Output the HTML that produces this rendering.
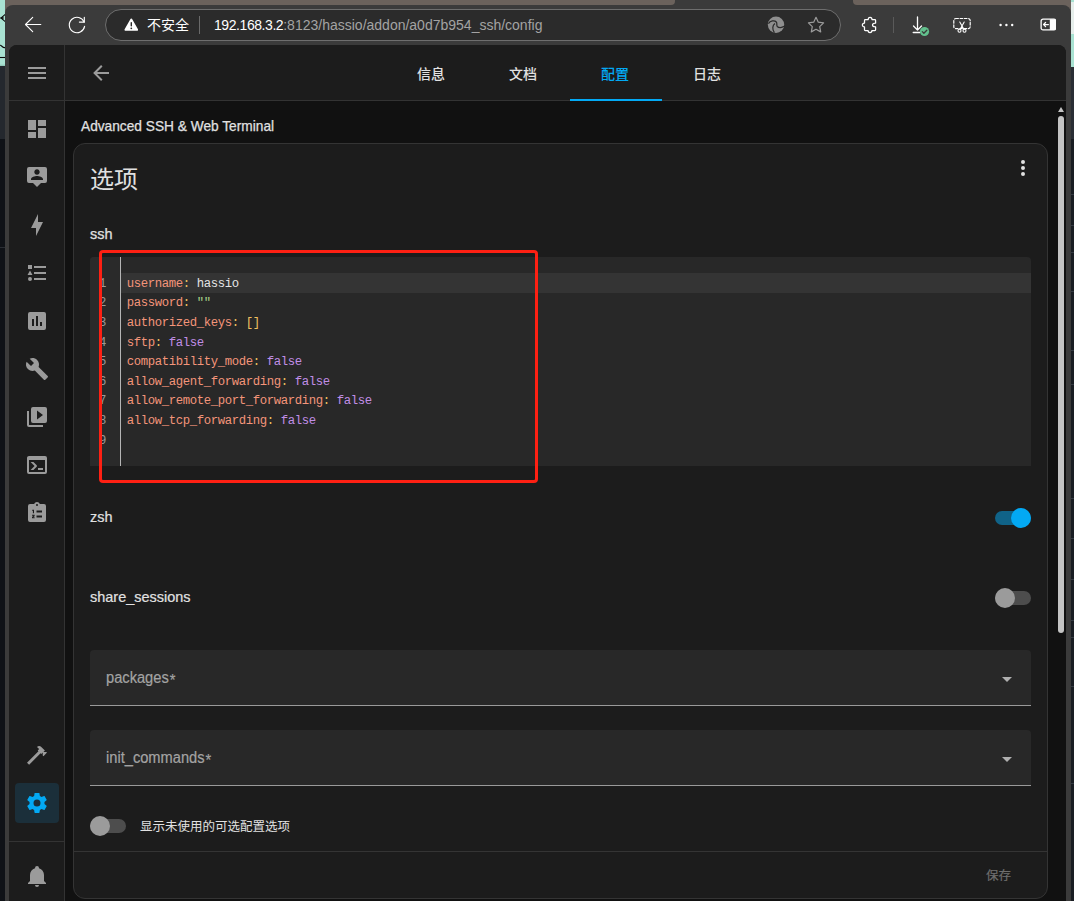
<!DOCTYPE html>
<html lang="zh-CN">
<head>
<meta charset="utf-8">
<title>Advanced SSH &amp; Web Terminal</title>
<style>
*{box-sizing:border-box;margin:0;padding:0}
html,body{width:1074px;height:901px;overflow:hidden;background:#1b1f25}
body{position:relative;font-family:"Liberation Sans","Noto Sans CJK SC",sans-serif;color:#e1e1e1;-webkit-font-smoothing:antialiased}
.abs{position:absolute}
svg{display:block}
/* desktop behind the window */
#deskL{left:0;top:0;width:5px;height:66.600px;background:linear-gradient(#a9e2d2 0,#a9e2d2 64px,#7fb5a6 66.600px)}
#deskL2{left:0;top:66px;width:5px;height:835px;background:linear-gradient(#24282e 0,#24282e 73px,#0f1217 73px,#0f1217 181px,#2a2e34 181px,#2a2e34 182px,#0f1217 182px)}
#deskR{left:1070px;top:0;width:4px;height:66.500px;background:linear-gradient(#a9e2d2 0,#a9e2d2 2px,#e6eeeb 2px,#e6eeeb 34px,#a9e2d2 34px)}
#deskR2{left:1070px;top:66.500px;width:4px;height:835px;background:linear-gradient(#2a2e35 0,#2a2e35 72px,#191d23 72px)}
.rl{position:absolute;left:1070px;width:4px;height:1px;background:#343a42}
#tabs1{left:4.600px;top:0;width:670px;height:4.800px;background:#6b625c;border-radius:0 0 4px 0}
.tback{position:absolute;top:0;width:20px;height:13px;background:#6b625c}
#tabs2{left:853px;top:0;width:217.600px;height:4.800px;background:#6b625c;border-radius:0 0 0 4px}
#tabgap{left:660px;top:0;width:210px;height:6px;background:#3b3b3b}
/* browser frame */
#frame{left:4.600px;top:4.500px;width:1066px;height:897px;background:#3b3b3b;border-radius:8px 8px 0 0}
#urlbar{left:105px;top:9px;width:736px;height:32px;border-radius:16px;background:#2b2b2b;border:1px solid #6e6e6e}
#page{left:9px;top:45px;width:1057px;height:856px;background:#1c1c1c;border-radius:8px 8px 0 0;overflow:hidden}

/* browser toolbar */
.tb{position:absolute}
#unsafe{left:147px;top:15px;font-size:14px;line-height:20px;color:#fff;white-space:nowrap}
#urlsep{left:199px;top:16px;width:1px;height:18px;background:#6a6a6a}
#url{left:214px;top:15px;font-size:14px;line-height:20px;color:#a3a3a3;white-space:nowrap;letter-spacing:0}
#url b{font-weight:normal;color:#fff;letter-spacing:-0.43px}
#tbsep{left:893px;top:17px;width:1px;height:16px;background:#5a5a5a}

/* HA page (coords relative to #page at 9,45) */
#side{left:0;top:0;width:55px;height:856px;background:#1c1c1c}
#sideline{left:55px;top:0;width:1px;height:856px;background:#333}
#sidehead{left:0;top:55px;width:56px;height:1px;background:#333}
#sidefoot{left:0;top:796px;width:56px;height:1px;background:#333}
.si{position:absolute;left:16px;width:24px;height:24px;fill:#9b9b9b}
#cogbox{left:6px;top:738px;width:44px;height:40px;border-radius:4px;background:#1b2f3a}
#head{left:56px;top:0;width:1001px;height:56px;background:#1c1c1c;border-bottom:1px solid #333}
.tab{position:absolute;top:0.700px;width:92px;height:56px;line-height:56px;text-align:center;font-size:14px;color:#e1e1e1;font-weight:500}
#tabline{left:561px;top:54px;width:92px;height:2px;background:#03a9f4}
#content{left:56px;top:56px;width:1001px;height:800px;background:#111111}

/* content coords relative to (65,101) */
#ttl{left:16.400px;top:15px;font-size:15px;line-height:20px;white-space:nowrap;color:#e1e1e1;-webkit-text-stroke:0.25px #e1e1e1;transform:scaleX(.914);transform-origin:0 0}
#card{left:8px;top:42px;width:975px;height:756px;background:#1c1c1c;border:1px solid #343434;border-radius:12px}
/* card-inner coords relative to (74,144) */
#h1{left:16.100px;top:18px;font-size:24px;line-height:36px;white-space:nowrap;color:#e1e1e1}
.lbl{position:absolute;left:16px;font-size:15px;line-height:20px;white-space:nowrap;color:#e1e1e1;-webkit-text-stroke:0.2px #e1e1e1;transform:scaleX(.965);transform-origin:0 0}
#ed{left:16px;top:113px;width:941px;height:209px;background:#282828;border-radius:4px 4px 0 0;overflow:hidden}
#gut{left:0;top:0;width:31px;height:209px;background:#2a2a2a;border-right:1px solid #b5b5b5}
#act{left:31px;top:16px;width:910px;height:19.600px;background:#343434}
.ln,.cl{position:absolute;font-family:"Liberation Mono",monospace;font-size:12.300px;letter-spacing:-0.380px;line-height:19.600px;height:19.600px;white-space:pre;margin-top:1.800px}
.ln{left:9px;width:7px;color:#9a9a9a}
.cl{left:36.700px;color:#e4e4e4}
.k{color:#f4957a}.p{color:#f0c060}.s{color:#a6d189}.b{color:#c08ee6}
#red{left:24.600px;top:105.700px;width:439.900px;height:233.500px;border:3.400px solid #fe2013;border-radius:4px}
.trk{position:absolute;width:36px;height:14px;border-radius:7px}
.thm{position:absolute;width:20px;height:20px;border-radius:10px}
.sel{position:absolute;left:16px;width:941px;height:56px;background:#282828;border-radius:4px 4px 0 0;border-bottom:1px solid #9a9a9a}
.sel span{position:absolute;left:16px;top:16px;font-size:16px;line-height:24px;color:#a3a3a3;-webkit-text-stroke:0.2px #a3a3a3;white-space:nowrap;transform:scaleX(.916);transform-origin:0 0}
.sel em{font-style:normal;position:relative;top:3px;left:1px}
.sel i{position:absolute;right:19.400px;top:27px;width:0;height:0;border-left:5px solid transparent;border-right:5px solid transparent;border-top:5px solid #b0b0b0}
#optl{left:66px;top:673.200px;font-size:12.500px;line-height:20px;white-space:nowrap;color:#e1e1e1}
#cdiv{left:0;top:707px;width:973px;height:1px;background:#343434}
#save{left:912px;top:722.400px;font-size:12.500px;line-height:20px;white-space:nowrap;color:#6e6e6e;-webkit-text-stroke:0.2px #6e6e6e}
#sbar{left:993px;top:14.700px;width:6.200px;height:517px;border-radius:3.100px;background:#c4c4c4}
#sarr{left:992.800px;top:5.600px;width:0;height:0;border-left:3.300px solid transparent;border-right:3.300px solid transparent;border-bottom:5.800px solid #c4c4c4}
</style>
</head>
<body>
<div class="abs" id="deskL"></div><svg class="abs" style="left:0;top:0" width="5" height="67" viewBox="0 0 5 67" fill="none" stroke="#0a0a0a" stroke-width="1.100"><path d="M5.300 14.300L1 18L5.300 21.700M0 18H4"/><path d="M0 45.300C1.500 45 2.500 48 5 47.600"/><path d="M0 57.500H5"/></svg><div class="abs" id="deskL2"></div>
<div class="abs" id="deskR"></div><div class="abs" id="deskR2"></div>
<div class="rl" style="top:194px"></div><div class="rl" style="top:225px"></div><div class="rl" style="top:252px"></div><div class="rl" style="top:291px"></div><div class="rl" style="top:350px"></div><div class="rl" style="top:384px"></div><div class="rl" style="top:498px"></div><div class="rl" style="top:538px"></div><div class="rl" style="top:579px"></div><div class="rl" style="top:620px"></div><div class="rl" style="top:637px"></div><div class="rl" style="top:686px"></div><div class="rl" style="top:783px"></div>
<div class="abs" id="tabgap"></div>
<div class="tback" style="left:4.600px"></div><div class="tback" style="left:1050.600px"></div>
<div class="abs" id="frame"></div>
<div class="abs" id="tabs1"></div><div class="abs" id="tabs2"></div>
<div class="abs" id="urlbar"></div>

<!-- browser toolbar icons -->
<svg class="tb" style="left:24px;top:15px" width="18" height="19" viewBox="0 0 18 19" fill="none" stroke="#fff" stroke-width="1.100" stroke-linecap="round" stroke-linejoin="round"><path d="M1.500 9.500H16.800M8.700 2.300L1.500 9.500L8.700 16.700"/></svg>
<svg class="tb" style="left:67px;top:15px" width="20" height="20" viewBox="0 0 20 20" fill="none" stroke="#fff" stroke-width="1.150" stroke-linecap="round" stroke-linejoin="round"><path d="M17.140 7.120A7.700 7.700 0 1 0 17.580 11.340"/><path d="M17.300 2.200V7.100H12.400"/></svg>
<svg class="tb" style="left:123.500px;top:18.300px" width="14.600" height="13.200" viewBox="0 0 16 15"><path d="M8 0.6c.5 0 .9.3 1.1.7l6.500 11.500c.4.800-.1 1.800-1.100 1.800H1.500c-1 0-1.500-1-1.100-1.800L6.900 1.300C7.100.9 7.500.6 8 .6z" fill="#fff"/><rect x="7.200" y="4.500" width="1.600" height="5.200" rx=".8" fill="#2b2b2b"/><circle cx="8" cy="11.800" r="1" fill="#2b2b2b"/></svg>
<div class="tb" id="unsafe">不安全</div>
<div class="tb" id="urlsep"></div>
<div class="tb" id="url"><b>192.168.3.2</b>:8123/hassio/addon/a0d7b954_ssh/config</div>
<!-- edge swirl -->
<svg class="tb" style="left:767px;top:16px" width="18" height="18" viewBox="0 0 18 18"><circle cx="9" cy="8.750" r="8.200" fill="#8f8f8f"/><path d="M1.400 7.600C3.300 4.500 7.600 4.100 9.300 6C10.600 7.500 9.100 9.100 10.300 10.500C11.700 12 14.800 12 17 10.300" fill="none" stroke="#2b2b2b" stroke-width="1.250"/><path d="M7.900 7.400C5.500 9.200 4.900 13.200 7.400 16.600" fill="none" stroke="#2b2b2b" stroke-width="1.250"/></svg>
<!-- star -->
<svg class="tb" style="left:807px;top:16px" width="18" height="18" viewBox="0 0 18 18" fill="none" stroke="#9b9b9b" stroke-width="1.200" stroke-linejoin="round"><path d="M9 1.300l2.300 4.900 5.300.7-3.900 3.700 1 5.300L9 13.300l-4.700 2.600 1-5.300L1.400 6.900l5.300-.7z"/></svg>
<!-- puzzle -->
<svg class="tb" style="left:860px;top:16px" width="18" height="18" viewBox="0 0 18 18" fill="none" stroke="#fff" stroke-width="1.250" stroke-linejoin="round"><path d="M5.300 3.600H8.200C8.200 2 9 1.300 10.100 1.300C11.200 1.300 12 2 12 3.600H14.800Q15.600 3.600 15.600 4.400V7.100C13.500 7.100 12.500 7.900 12.500 9C12.500 10.100 13.500 10.900 15.600 10.900V13.700Q15.600 14.500 14.800 14.500H11.900C11.900 15.900 11.100 16.600 10 16.600C8.900 16.600 8.100 15.900 8.100 14.500H5.300Q4.500 14.500 4.500 13.700V10.900C3.200 10.900 2.400 10.100 2.400 9C2.400 7.900 3.200 7.100 4.500 7.100V4.400Q4.500 3.600 5.300 3.600Z"/></svg>
<div class="tb" id="tbsep"></div>
<!-- download -->
<svg class="tb" style="left:908px;top:14px" width="24" height="24" viewBox="0 0 24 24" fill="none" stroke="#fff" stroke-width="1.300" stroke-linecap="round" stroke-linejoin="round"><path d="M9.500 3V16M5.500 12l4 4.100 4-4.100M5.200 18.500h6.800"/><circle cx="16.500" cy="17.500" r="4.600" fill="#62c08d" stroke="none"/><path d="M14.300 17.600l1.600 1.600 2.900-3" stroke="#3b3b3b" stroke-width="1.300"/></svg>
<!-- screenshot -->
<svg class="tb" style="left:952px;top:16px" width="20" height="18" viewBox="0 0 20 18" fill="none" stroke="#fff" stroke-width="1.200" stroke-linecap="round"><rect x="1.800" y="2.500" width="16.400" height="10.200" rx="2" stroke-dasharray="2.600 1.700"/><path d="M7.800 6l4.200 7.400M12.200 6L8 13.400" stroke-width="1.100"/><circle cx="7.500" cy="14.800" r="1.500" stroke-width="1.100" fill="#3b3b3b"/><circle cx="12.500" cy="14.800" r="1.500" stroke-width="1.100" fill="#3b3b3b"/></svg>
<!-- dots -->
<svg class="tb" style="left:998px;top:22px" width="18" height="6" viewBox="0 0 18 6" fill="#fff"><circle cx="2.600" cy="3" r="1.200"/><circle cx="8.400" cy="3" r="1.200"/><circle cx="14.200" cy="3" r="1.200"/></svg>
<!-- sidebar toggle -->
<svg class="tb" style="left:1039.500px;top:18.400px" width="16.800" height="13.100" viewBox="0 0 18 14"><rect x="1.200" y="1.200" width="15.600" height="11.600" rx="2" fill="none" stroke="#fff" stroke-width="1.400"/><path d="M10.500 1.200H15a1.800 1.800 0 0 1 1.800 1.800v8a1.800 1.800 0 0 1-1.800 1.800h-4.500z" fill="#fff"/><path d="M4 7h5M6 4.800L3.800 7 6 9.200" fill="none" stroke="#fff" stroke-width="1.300" stroke-linecap="round" stroke-linejoin="round"/></svg>
<div class="abs" id="page">
<div class="abs" id="side"></div>
<div class="abs" id="sideline"></div>
<div class="abs" id="sidehead"></div>
<div class="abs" id="sidefoot"></div>
<div class="abs" id="cogbox"></div>
<svg class="si" style="top:16px" viewBox="0 0 24 24"><path d="M3,6H21V8H3V6M3,11H21V13H3V11M3,16H21V18H3V16Z"/></svg>
<svg class="si" style="top:72px" viewBox="0 0 24 24"><path d="M13,3V9H21V3M13,21H21V11H13M3,21H11V15H3M3,13H11V3H3V13Z"/></svg>
<svg class="si" style="top:120px" viewBox="0 0 24 24"><path d="M20,2H4A2,2 0 0,0 2,4V16A2,2 0 0,0 4,18H8L12,22L16,18H20A2,2 0 0,0 22,16V4A2,2 0 0,0 20,2M12,4.300C13.500,4.300 14.700,5.500 14.700,7C14.700,8.500 13.500,9.700 12,9.700C10.500,9.700 9.300,8.500 9.300,7C9.300,5.500 10.500,4.300 12,4.300M18,15H6V14.100C6,12.100 10,11 12,11C14,11 18,12.100 18,14.100V15Z"/></svg>
<svg class="si" style="top:168px" viewBox="0 0 24 24"><path d="M11,15H6L13,1V9H18L11,23V15Z"/></svg>
<svg class="si" style="top:216px" viewBox="0 0 24 24"><path d="M5,9.500L7.500,14H2.500L5,9.500M3,4H7V8H3V4M5,20A2,2 0 0,0 7,18A2,2 0 0,0 5,16A2,2 0 0,0 3,18A2,2 0 0,0 5,20M9,5V7H21V5H9M9,19H21V17H9V19M9,13H21V11H9V13Z"/></svg>
<svg class="si" style="top:264px" viewBox="0 0 24 24"><path d="M19,3H5A2,2 0 0,0 3,5V19A2,2 0 0,0 5,21H19A2,2 0 0,0 21,19V5A2,2 0 0,0 19,3M9,17H7V10H9V17M13,17H11V7H13V17M17,17H15V13H17V17Z"/></svg>
<svg class="si" style="top:312px" viewBox="0 0 24 24"><path d="M22.700,19L13.600,9.900C14.500,7.600 14,4.900 12.100,3C10.100,1 7.100,0.600 4.700,1.700L9,6L6,9L1.600,4.700C0.400,7.100 0.900,10.100 2.900,12.100C4.800,14 7.500,14.500 9.800,13.600L18.900,22.700C19.300,23.100 19.900,23.100 20.300,22.700L22.600,20.400C23.100,20 23.100,19.300 22.700,19Z"/></svg>
<svg class="si" style="top:360px" viewBox="0 0 24 24"><path d="M4,6H2V20A2,2 0 0,0 4,22H18V20H4V6M20,2H8A2,2 0 0,0 6,4V16A2,2 0 0,0 8,18H20A2,2 0 0,0 22,16V4A2,2 0 0,0 20,2M12,14.500V5.500L18,10L12,14.500Z"/></svg>
<svg class="si" style="top:408px" viewBox="0 0 24 24"><path d="M20,19V7H4V19H20M20,3A2,2 0 0,1 22,5V19A2,2 0 0,1 20,21H4A2,2 0 0,1 2,19V5C2,3.890 2.900,3 4,3H20M13,17V15H18V17H13M9.580,13L5.570,9H8.400L11.700,12.300C12.090,12.690 12.090,13.330 11.700,13.720L8.420,17H5.590L9.580,13Z"/></svg>
<svg class="si" style="top:456px" viewBox="0 0 24 24"><path fill-rule="evenodd" d="M19,3H14.820C14.400,1.840 13.300,1 12,1C10.700,1 9.600,1.840 9.180,3H5A2,2 0 0,0 3,5V19A2,2 0 0,0 5,21H19A2,2 0 0,0 21,19V5A2,2 0 0,0 19,3M12,3A1,1 0 0,1 13,4A1,1 0 0,1 12,5A1,1 0 0,1 11,4A1,1 0 0,1 12,3M11.500,9.500H17V11.500H11.500V9.500M11.500,14.500H17V16.500H11.500V14.500M7.300,8.800H9V12.200H7.900V9.900H7.300V8.800M7,13.800H9.600V15.200L8.300,16.200H9.600V17.200H7V16L8.400,14.800H7V13.800Z"/></svg>
<svg class="si" style="top:698px" viewBox="0 0 24 24"><path d="M2,19.630L13.430,8.200L12.720,7.500L14.140,6.070L12,3.890C13.200,2.700 15.090,2.700 16.270,3.890L19.870,7.500L18.450,8.910H21.290L22,9.620L18.450,13.210L17.740,12.500V9.620L16.270,11.040L15.560,10.330L4.130,21.760L2,19.630Z"/></svg>
<svg class="si" style="top:746px;fill:#03a9f4" viewBox="0 0 24 24"><path d="M12,15.500A3.500,3.500 0 0,1 8.500,12A3.500,3.500 0 0,1 12,8.500A3.500,3.500 0 0,1 15.500,12A3.500,3.500 0 0,1 12,15.500M19.430,12.970C19.470,12.650 19.500,12.330 19.500,12C19.500,11.670 19.470,11.340 19.430,11L21.540,9.370C21.730,9.220 21.780,8.950 21.660,8.730L19.660,5.270C19.540,5.050 19.270,4.960 19.050,5.050L16.560,6.050C16.040,5.660 15.500,5.320 14.870,5.070L14.500,2.420C14.460,2.180 14.250,2 14,2H10C9.750,2 9.540,2.180 9.500,2.420L9.130,5.070C8.500,5.320 7.960,5.660 7.440,6.050L4.950,5.050C4.730,4.960 4.460,5.050 4.340,5.270L2.340,8.730C2.210,8.950 2.270,9.220 2.460,9.370L4.570,11C4.530,11.340 4.500,11.670 4.500,12C4.500,12.330 4.530,12.650 4.570,12.970L2.460,14.630C2.270,14.780 2.210,15.050 2.340,15.270L4.340,18.730C4.460,18.950 4.730,19.030 4.950,18.950L7.440,17.940C7.960,18.340 8.500,18.680 9.130,18.930L9.500,21.580C9.540,21.820 9.750,22 10,22H14C14.250,22 14.460,21.820 14.500,21.580L14.870,18.930C15.500,18.670 16.040,18.340 16.560,17.940L19.050,18.950C19.270,19.030 19.540,18.950 19.660,18.730L21.660,15.270C21.780,15.050 21.730,14.780 21.540,14.630L19.430,12.970Z"/></svg>
<svg class="si" style="top:819px" viewBox="0 0 24 24"><path d="M21,19V20H3V19L5,17V11C5,7.900 7.030,5.170 10,4.290C10,4.190 10,4.100 10,4A2,2 0 0,1 12,2A2,2 0 0,1 14,4C14,4.100 14,4.190 14,4.290C16.970,5.170 19,7.900 19,11V17L21,19M14,21A2,2 0 0,1 12,23A2,2 0 0,1 10,21"/></svg>
<div class="abs" id="head">
<svg class="si" style="left:24px;top:16px" viewBox="0 0 24 24"><path d="M20,11V13H8L13.500,18.500L12.080,19.920L4.160,12L12.080,4.080L13.500,5.500L8,11H20Z"/></svg>
<div class="tab" style="left:320px">信息</div>
<div class="tab" style="left:412px">文档</div>
<div class="tab" style="left:504px;color:#03a9f4">配置</div>
<div class="tab" style="left:596px">日志</div>
</div>
<div class="abs" id="tabline"></div>
<div class="abs" id="content">

<div class="abs" id="ttl">Advanced SSH &amp; Web Terminal</div>
<div class="abs" id="card">
<div class="abs" id="h1">选项</div>
<svg class="abs" style="left:937px;top:12px;fill:#e1e1e1" width="24" height="24" viewBox="0 0 24 24"><path d="M12,16A2,2 0 0,1 14,18A2,2 0 0,1 12,20A2,2 0 0,1 10,18A2,2 0 0,1 12,16M12,10A2,2 0 0,1 14,12A2,2 0 0,1 12,14A2,2 0 0,1 10,12A2,2 0 0,1 12,10M12,4A2,2 0 0,1 14,6A2,2 0 0,1 12,8A2,2 0 0,1 10,6A2,2 0 0,1 12,4Z"/></svg>
<div class="lbl" style="top:80px;-webkit-text-stroke:0.25px #e1e1e1">ssh</div>
<div class="abs" id="ed">
<div class="abs" id="gut"></div>
<div class="abs" id="act"></div>
<div class="ln" style="top:16.0px">1</div><div class="cl" style="top:16.0px"><span class="k">username</span><span class="p">:</span> hassio</div>
<div class="ln" style="top:35.6px">2</div><div class="cl" style="top:35.6px"><span class="k">password</span><span class="p">:</span> <span class="s">""</span></div>
<div class="ln" style="top:55.2px">3</div><div class="cl" style="top:55.2px"><span class="k">authorized_keys</span><span class="p">:</span> <span class="p">[]</span></div>
<div class="ln" style="top:74.8px">4</div><div class="cl" style="top:74.8px"><span class="k">sftp</span><span class="p">:</span> <span class="b">false</span></div>
<div class="ln" style="top:94.4px">5</div><div class="cl" style="top:94.4px"><span class="k">compatibility_mode</span><span class="p">:</span> <span class="b">false</span></div>
<div class="ln" style="top:114.0px">6</div><div class="cl" style="top:114.0px"><span class="k">allow_agent_forwarding</span><span class="p">:</span> <span class="b">false</span></div>
<div class="ln" style="top:133.6px">7</div><div class="cl" style="top:133.6px"><span class="k">allow_remote_port_forwarding</span><span class="p">:</span> <span class="b">false</span></div>
<div class="ln" style="top:153.2px">8</div><div class="cl" style="top:153.2px"><span class="k">allow_tcp_forwarding</span><span class="p">:</span> <span class="b">false</span></div>
<div class="ln" style="top:172.8px">9</div><div class="cl" style="top:172.8px"></div>
</div>
<div class="abs" id="red"></div>
<div class="lbl" style="top:363px">zsh</div>
<div class="trk" style="left:921px;top:367px;background:#106388"></div>
<div class="thm" style="left:937px;top:364px;background:#03a9f4"></div>
<div class="lbl" style="top:443px">share_sessions</div>
<div class="trk" style="left:921px;top:447px;background:#4d4d4d"></div>
<div class="thm" style="left:921px;top:444px;background:#9b9b9b"></div>
<div class="sel" style="top:506px"><span>packages<em>*</em></span><i></i></div>
<div class="sel" style="top:586px"><span>init_commands<em>*</em></span><i></i></div>
<div class="trk" style="left:16px;top:675px;background:#4d4d4d"></div>
<div class="thm" style="left:16px;top:672px;background:#9b9b9b"></div>
<div class="abs" id="optl">显示未使用的可选配置选项</div>
<div class="abs" id="cdiv"></div>
<div class="abs" id="save">保存</div>
</div>
<div class="abs" id="sarr"></div>
<div class="abs" id="sbar"></div>

</div>
</div>
</body>
</html>
